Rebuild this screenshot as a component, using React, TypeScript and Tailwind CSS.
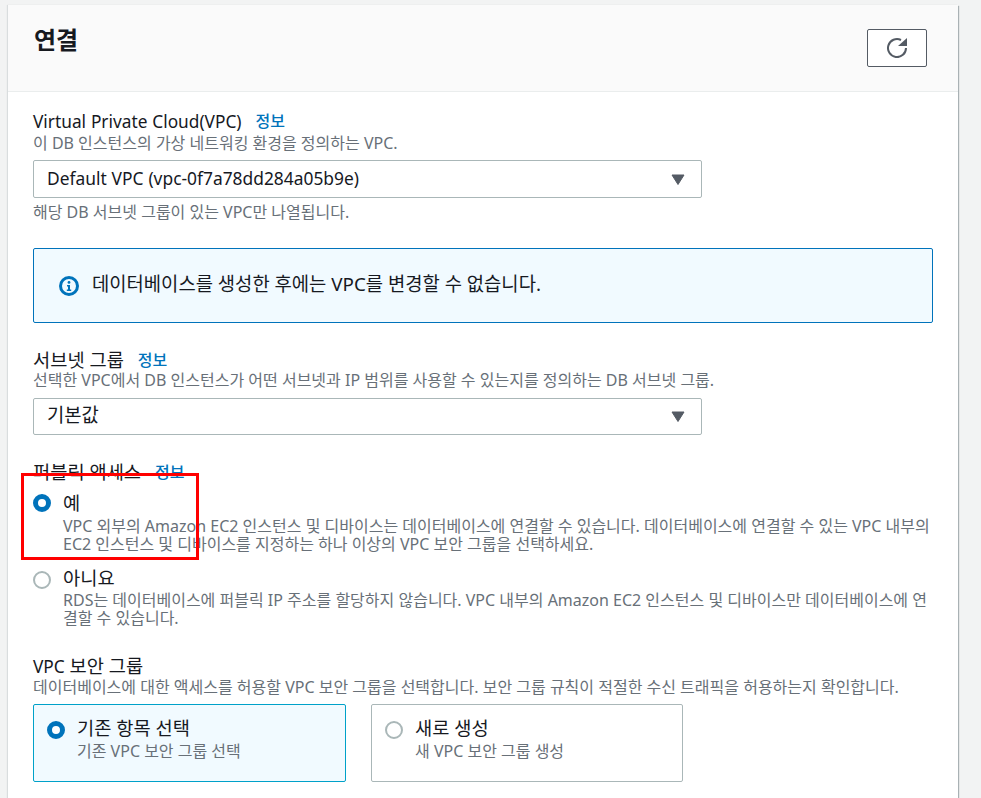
const FONT = "font-['Noto_Sans','Noto_Sans_CJK_KR',sans-serif]";

// Latin runs sit a little smaller than the Hangul around them
function T({ children }: { children: string }) {
  return (
    <>
      {children.split(/([A-Za-z0-9().\-]+)/).map((part, i) =>
        i % 2 === 1 ? (
          <span key={i} className="text-[0.925em]">
            {part}
          </span>
        ) : (
          part
        ),
      )}
    </>
  );
}

function Label({ text, info = true }: { text: string; info?: boolean }) {
  return (
    <div className="flex items-start h-[23px] text-[18.7px] leading-[24px] text-[#16191f]">
      <span>
        <T>{text}</T>
      </span>
      {info && <span className="ml-[14px] text-[16px] font-medium text-[#0073bb]">정보</span>}
    </div>
  );
}

function Desc({ children }: { children: string }) {
  return <p className="text-[16px] leading-[18px] text-[#687078] whitespace-nowrap">{children}</p>;
}

function Select({ value, height }: { value: string; height: string }) {
  return (
    <div className={`${height} w-[669px] flex items-center justify-between pl-[13px] pr-[16px] bg-white border border-[#aab7b8] rounded-[2px] text-[18.8px] text-[#16191f]`}>
      <span className="-mt-[2px]">
        <T>{value}</T>
      </span>
      <svg width="14" height="11" viewBox="0 0 14 11">
        <path d="M1 1h12L7 10.5z" fill="#545b64" stroke="#545b64" strokeLinejoin="round" />
      </svg>
    </div>
  );
}

function Radio({ checked }: { checked: boolean }) {
  return checked ? (
    <span className="block w-[18px] h-[18px] shrink-0 rounded-full border-[5px] border-[#0073bb] bg-white" />
  ) : (
    <span className="block w-[18px] h-[18px] shrink-0 rounded-full border-2 border-[#aab7b8] bg-white" />
  );
}

function RadioOption({
  checked,
  title,
  lines,
  radioTop,
  titleLeading,
}: {
  checked: boolean;
  title: string;
  lines: string[];
  radioTop: string;
  titleLeading: string;
}) {
  return (
    <div className="flex gap-[12px]">
      <div className={radioTop}>
        <Radio checked={checked} />
      </div>
      <div>
        <div className={`text-[18.7px] text-[#16191f] ${titleLeading}`}>{title}</div>
        {lines.map((l) => (
          <Desc key={l}>{l}</Desc>
        ))}
      </div>
    </div>
  );
}

function Tile({ checked, title, sub, width }: { checked: boolean; title: string; sub: string; width: string }) {
  return (
    <div className={`${width} h-[78px] flex gap-[12px] pl-[13px] pt-[11px] rounded-[2px] border ${checked ? "bg-[#f1faff] border-[#00a1c9]" : "bg-white border-[#aab7b8]"}`}>
      <div className="pt-[5px]">
        <Radio checked={checked} />
      </div>
      <div>
        <div className="text-[18.7px] leading-[24px] text-[#16191f]">{title}</div>
        <div className="mt-[1px] text-[16px] leading-[20px] text-[#687078]">{sub}</div>
      </div>
    </div>
  );
}

export default function App() {
  return (
    <div className={`${FONT} relative w-[981px] h-[798px] overflow-hidden bg-[#f2f3f3] pl-[8px] pt-[5px]`}>
      <div className="w-[950px] h-[793px] bg-white shadow-[1px_1px_1px_0_rgba(0,28,36,0.3),-1px_0_1px_0_rgba(0,28,36,0.1)]">
        <div className="h-[87px] flex justify-between bg-[#fafafa] border-b border-[#eaeded] pl-[26px] pr-[31px]">
          <h2 className="mt-[17px] text-[24px] leading-[36px] font-bold text-[#16191f]">연결</h2>
          <button className="mt-[24px] w-[60px] h-[38px] flex items-center justify-center bg-white border border-[#545b64] rounded-[2px]">
            <svg width="20" height="20" viewBox="0 0 20 20" fill="none">
              <path d="M19 10A9 9 0 1 1 14 2" stroke="#545b64" strokeWidth="2" />
              <path d="M11 8H20V0z" fill="#545b64" />
            </svg>
          </button>
        </div>

        <div className="pl-[25px] pr-[25px] pt-[17px]">
          <Label text="Virtual Private Cloud(VPC)" />
          <div className="mt-[2px]">
            <Desc>이 DB 인스턴스의 가상 네트워킹 환경을 정의하는 VPC.</Desc>
          </div>
          <div className="mt-[8px]">
            <Select value="Default VPC (vpc-0f7a78dd284a05b9e)" height="h-[38px]" />
          </div>
          <div className="mt-[5px]">
            <Desc>해당 DB 서브넷 그룹이 있는 VPC만 나열됩니다.</Desc>
          </div>

          <div className="mt-[27px] h-[75px] flex items-center gap-[13px] pl-[25px] bg-[#f1faff] border border-[#0073bb] rounded-[2px]">
            <svg width="20" height="20" viewBox="0 0 20 20" fill="none">
              <circle cx="10" cy="10" r="8.5" stroke="#0073bb" strokeWidth="3" />
              <circle cx="10" cy="6.4" r="1.4" fill="#0073bb" />
              <path d="M8 9h3v4.4h1.2V15H7.8v-1.6H9V10.6H8z" fill="#0073bb" />
            </svg>
            <span className="-mt-[2px] text-[18.8px] text-[#16191f]">데이터베이스를 생성한 후에는 VPC를 변경할 수 없습니다.</span>
          </div>

          <div className="mt-[25px]">
            <Label text="서브넷 그룹" />
            <Desc>선택한 VPC에서 DB 인스턴스가 어떤 서브넷과 IP 범위를 사용할 수 있는지를 정의하는 DB 서브넷 그룹.</Desc>
          </div>
          <div className="mt-[9px]">
            <Select value="기본값" height="h-[37px]" />
          </div>

          <div className="mt-[25px]">
            <Label text="퍼블릭 액세스" />
          </div>
          <div className="mt-[6px]">
            <RadioOption
              checked
              title="예"
              radioTop="pt-[5px]"
              titleLeading="leading-[28px]"
              lines={[
                "VPC 외부의 Amazon EC2 인스턴스 및 디바이스는 데이터베이스에 연결할 수 있습니다. 데이터베이스에 연결할 수 있는 VPC 내부의",
                "EC2 인스턴스 및 디바이스를 지정하는 하나 이상의 VPC 보안 그룹을 선택하세요.",
              ]}
            />
          </div>
          <div className="mt-[12px]">
            <RadioOption
              checked={false}
              title="아니요"
              radioTop="pt-[6px]"
              titleLeading="leading-[26px]"
              lines={[
                "RDS는 데이터베이스에 퍼블릭 IP 주소를 할당하지 않습니다. VPC 내부의 Amazon EC2 인스턴스 및 디바이스만 데이터베이스에 연",
                "결할 수 있습니다.",
              ]}
            />
          </div>

          <div className="mt-[27px]">
            <Label text="VPC 보안 그룹" info={false} />
            <div className="mt-[1px]">
              <Desc>데이터베이스에 대한 액세스를 허용할 VPC 보안 그룹을 선택합니다. 보안 그룹 규칙이 적절한 수신 트래픽을 허용하는지 확인합니다.</Desc>
            </div>
          </div>
          <div className="mt-[8px] flex gap-[25px]">
            <Tile checked title="기존 항목 선택" sub="기존 VPC 보안 그룹 선택" width="w-[313px]" />
            <Tile checked={false} title="새로 생성" sub="새 VPC 보안 그룹 생성" width="w-[312px]" />
          </div>
        </div>
      </div>

      {/* red annotation box drawn over the screenshot */}
      <div className="absolute left-[21px] top-[473px] w-[178px] h-[87px] border-[3px] border-[#ff0000]" />
    </div>
  );
}
